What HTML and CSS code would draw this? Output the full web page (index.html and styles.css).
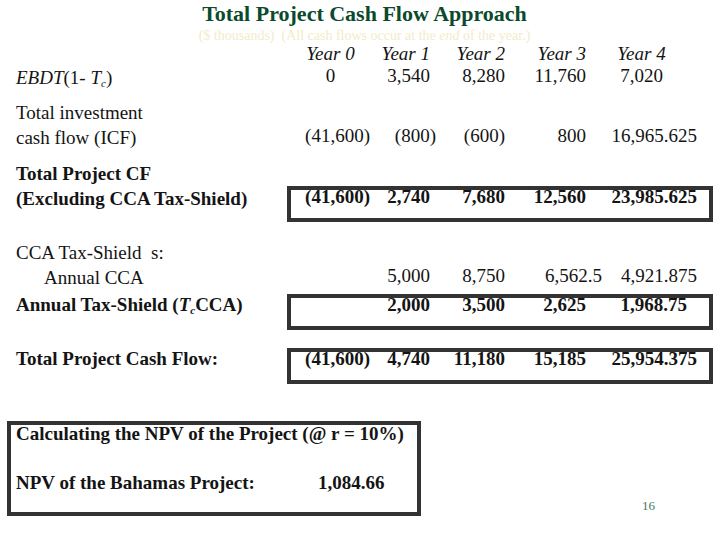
FILE: index.html
```html
<!DOCTYPE html>
<html>
<head>
<meta charset="utf-8">
<link rel="stylesheet" href="styles.css">
</head>
<body>
<div class="sheet">
  <h1 class="title">Total Project Cash Flow Approach</h1>
  <p class="sub">($ thousands)&nbsp; (All cash flows occur at the <i>end</i> of the year.)</p>

  <div class="row head">
    <div class="label"></div>
    <div class="vals">
      <span class="v c">Year 0</span><span class="v">Year 1</span><span class="v">Year 2</span><span class="v">Year 3</span><span class="v c">Year 4</span>
    </div>
  </div>

  <div class="row r-ebdt">
    <div class="label"><i>EBDT</i>(1- <i>T<sub>c</sub></i>)</div>
    <div class="vals">
      <span class="v c">0</span><span class="v">3,540</span><span class="v">8,280</span><span class="v">11,760</span><span class="v c">7,020</span>
    </div>
  </div>

  <div class="row r-icf">
    <div class="label">Total investment<br>cash flow (ICF)</div>
    <div class="vals two">
      <span class="v">(41,600)</span><span class="v n-800">(800)</span><span class="v">(600)</span><span class="v">800</span><span class="v">16,965.625</span>
    </div>
  </div>

  <div class="row r-tpcf bold">
    <div class="label">Total Project CF<br>(Excluding CCA Tax-Shield)</div>
    <div class="vals box two">
      <span class="v">(41,600)</span><span class="v">2,740</span><span class="v">7,680</span><span class="v">12,560</span><span class="v">23,985.625</span>
    </div>
  </div>

  <div class="row r-ccah">
    <div class="label">CCA Tax-Shield&nbsp; s:</div>
  </div>

  <div class="row r-cca">
    <div class="label indent">Annual CCA</div>
    <div class="vals">
      <span class="v"></span><span class="v">5,000</span><span class="v">8,750</span><span class="v n-6562">6,562.5</span><span class="v">4,921.875</span>
    </div>
  </div>

  <div class="row r-ts bold">
    <div class="label single">Annual Tax-Shield (<i>T<sub>c</sub></i>CCA)</div>
    <div class="vals box">
      <span class="v"></span><span class="v">2,000</span><span class="v">3,500</span><span class="v">2,625</span><span class="v n-1968">1,968.75</span>
    </div>
  </div>

  <div class="row r-tcf bold">
    <div class="label single">Total Project Cash Flow:</div>
    <div class="vals box">
      <span class="v">(41,600)</span><span class="v">4,740</span><span class="v">11,180</span><span class="v">15,185</span><span class="v">25,954.375</span>
    </div>
  </div>

  <div class="foot">
    <div class="npv">
      <div class="npv-title">Calculating the NPV of the Project (@ r = 10%)</div>
      <div class="npv-line"><span class="npv-label">NPV of the Bahamas Project:</span><span>1,084.66</span></div>
    </div>
    <div class="pageno">16</div>
  </div>
</div>
</body>
</html>
```

FILE: styles.css
```css
* { box-sizing: border-box; }
html, body { margin: 0; padding: 0; background: #ffffff; }
body {
  font-family: "Liberation Serif", "Times New Roman", serif;
  font-size: 19px;
  color: #141414;
  width: 720px;
  height: 540px;
  overflow: hidden;
}
.sheet { padding: 0 7px 0 16px; }

.title {
  margin: 0;
  font-size: 22px;
  line-height: 28px;
  font-weight: bold;
  color: #0b4a2c;
  text-align: center;
}
.sub {
  margin: 0;
  font-size: 14px;
  line-height: 16px;
  color: #f1ecca;
  text-align: center;
}

.row {
  display: grid;
  grid-template-columns: 271px 426px;
  align-items: start;
}
.row .label { line-height: 25px; }
.row .label.single { line-height: 22px; }
.label.indent { padding-left: 28px; }
.label sub { font-size: 11px; vertical-align: -3px; line-height: 0; }

.vals {
  display: grid;
  grid-template-columns: 79px 60px 75px 81px 111px;
  padding: 4px 4px 0;
  line-height: 14px;
  white-space: nowrap;
}
.vals.two { margin-top: 25px; }
.vals.box {
  border: 4px solid #333333;
  padding: 0 0 14px;
}
.v { text-align: right; }
.v.c { text-align: center; }

.bold { font-weight: bold; }

.head { margin-top: 3px; }
.head .vals { padding-top: 0; font-style: italic; }
.r-ebdt { margin-top: 4px; }
.r-icf { margin-top: 10px; }
.r-tpcf { margin-top: 11px; }
.r-ccah { margin-top: 18px; }
.r-ts { margin-top: 4px; }
.r-tcf { margin-top: 18px; }

.n-800 { margin-right: -6px; }
.n-6562 { margin-right: -16px; }
.n-1968 { margin-right: 10px; }

.foot {
  display: flex;
  justify-content: space-between;
  align-items: flex-end;
  margin: 37px 0 0 -9px;
}
.npv {
  width: 414px;
  border: 4px solid #333333;
  padding: 0 0 20px 5px;
  font-weight: bold;
  line-height: 18px;
}
.npv-line { display: flex; margin-top: 31px; }
.npv-label { width: 302px; }
.pageno {
  font-size: 13px;
  line-height: 14px;
  color: #3f7a5a;
  margin: 0 58px 3px 0;
}
```
